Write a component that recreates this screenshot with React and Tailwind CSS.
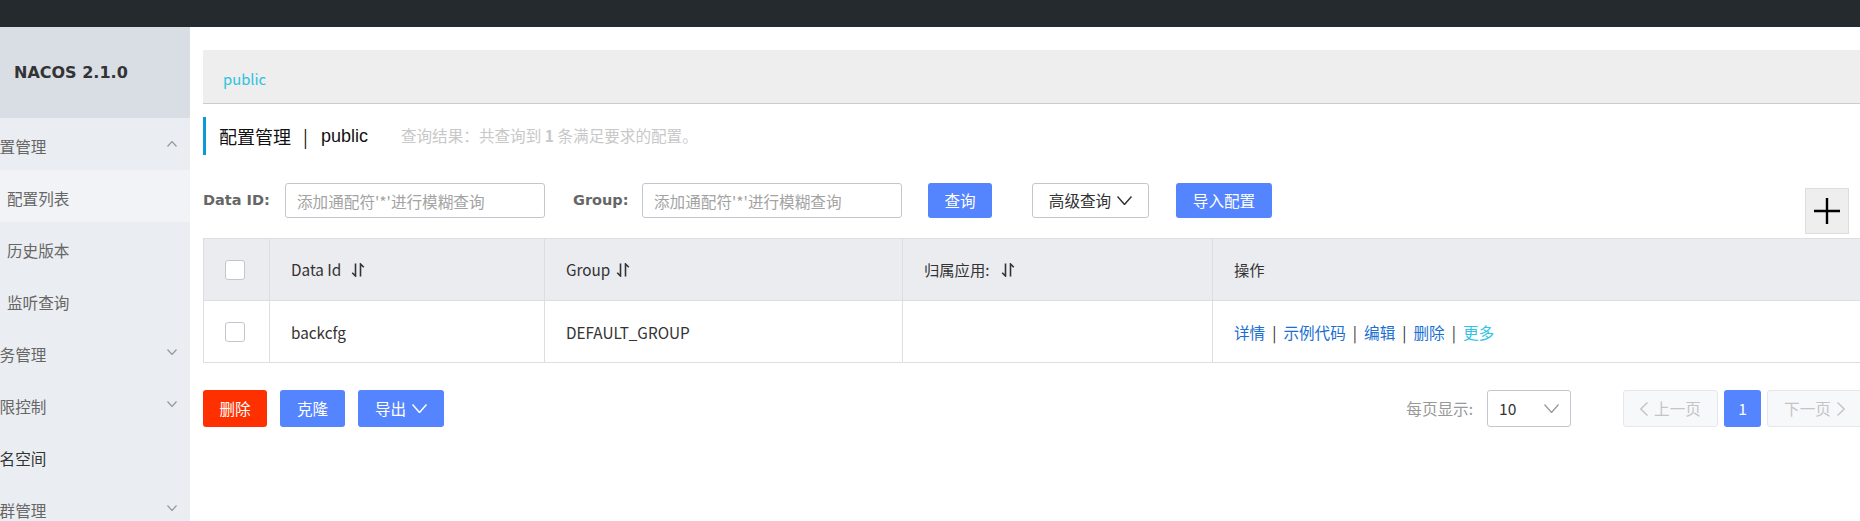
import React from "react";

const Chevron = ({ dir = "down", color = "#999", w = 10, h = 6, sw = 1.2 }) => (
  <svg width={w} height={h} viewBox={`0 0 ${w} ${h}`} fill="none">
    {dir === "down" ? (
      <polyline points={`0.5,0.5 ${w / 2},${h - 0.5} ${w - 0.5},0.5`} stroke={color} strokeWidth={sw} />
    ) : (
      <polyline points={`0.5,${h - 0.5} ${w / 2},0.5 ${w - 0.5},${h - 0.5}`} stroke={color} strokeWidth={sw} />
    )}
  </svg>
);

const SortIcon = ({ ml = "ml-[10px]" }) => (
  <svg width="14" height="14" viewBox="0 0 14 14" fill="none" className={ml}>
    <path d="M4.5 0.5 V13 L1.2 9.7" stroke="#333" strokeWidth="1.6" />
    <path d="M9.5 13.5 V1 L12.8 4.3" stroke="#333" strokeWidth="1.6" />
  </svg>
);

const MenuItem = ({ label, sub, chevron, active, dark }) => (
  <div
    className={`h-[52px] shrink-0 flex items-center justify-between pr-[13px] pt-[6px] ${
      active ? "bg-[#f2f3f7]" : ""
    }`}
  >
    <span
      className={`text-[15.6px] whitespace-nowrap ${sub ? "ml-[7px]" : "ml-[-16px]"} ${
        dark ? "text-[#333]" : "text-[#666]"
      }`}
    >
      {label}
    </span>
    {chevron && (
      <span className="-mt-[6px]">
        <Chevron dir={chevron} />
      </span>
    )}
  </div>
);

const Checkbox = () => (
  <div className="w-[20px] h-[20px] border border-[#c4c6cf] rounded-[3px] bg-white" />
);

export default function App() {
  const cols = ["w-[66px]", "w-[275px]", "w-[358px]", "w-[310px]", "w-[650px]"];
  const cell = "shrink-0 border-r border-[#dcdee3] flex items-center pl-[21px]";
  return (
    <div className="w-[1860px] h-[521px] overflow-hidden bg-white flex flex-col font-['Noto_Sans_CJK_SC',sans-serif]">
      <div className="h-[27px] shrink-0 bg-[#252a2f]" />
      <div className="flex flex-1 min-h-0">
        {/* Sidebar */}
        <div className="w-[190px] shrink-0 bg-[#eaedf1] overflow-hidden flex flex-col">
          <div className="h-[91px] shrink-0 bg-[#d9dde4] flex items-center pl-[14px]">
            <span className="font-['DejaVu_Sans',sans-serif] font-bold text-[16px] text-[#333]">
              NACOS 2.1.0
            </span>
          </div>
          <MenuItem label="配置管理" chevron="up" />
          <MenuItem label="配置列表" sub active />
          <MenuItem label="历史版本" sub />
          <MenuItem label="监听查询" sub />
          <MenuItem label="服务管理" chevron="down" />
          <MenuItem label="权限控制" chevron="down" />
          <MenuItem label="命名空间" dark />
          <MenuItem label="集群管理" chevron="down" />
        </div>

        {/* Main */}
        <div className="flex-1 min-w-0 pl-[13px] pt-[23px]">
          <div className="w-[1659px]">
            {/* Breadcrumb */}
            <div className="h-[54px] bg-[#eeeeee] border-b border-[#cccccc] flex items-center pl-[20px] pt-[6px]">
              <span className="text-[14.8px] text-[#2cc2e0]">public</span>
            </div>

            {/* Title */}
            <div className="mt-[13px] h-[38px] border-l-[3px] border-[#0a9bd4] flex items-center pl-[13px]">
              <span className="text-[18px] text-[#111]">配置管理</span>
              <span className="text-[18px] text-[#111] ml-[12px]">|</span>
              <span className="text-[18px] text-[#111] ml-[13px] font-['Liberation_Sans',sans-serif]">public</span>
              <span className="text-[15.6px] text-[#c8c8c8] ml-[33px]">
                查询结果：共查询到 <b className="font-bold">1</b> 条满足要求的配置。
              </span>
            </div>

            {/* Filter row */}
            <div className="mt-[28px] h-[35px] flex items-center">
              <span className="w-[66px] shrink-0 font-['DejaVu_Sans',sans-serif] font-bold text-[14.5px] text-[#666] whitespace-nowrap">
                Data ID:
              </span>
              <input
                className="ml-[16px] w-[260px] h-[35px] border border-[#c4c6cf] rounded-[3px] px-[11px] text-[15.6px] text-[#333] outline-none placeholder:text-[#a3a3a3]"
                placeholder="添加通配符'*'进行模糊查询"
              />
              <span className="ml-[28px] w-[53px] shrink-0 font-['DejaVu_Sans',sans-serif] font-bold text-[14.5px] text-[#666] whitespace-nowrap">
                Group:
              </span>
              <input
                className="ml-[16px] w-[260px] h-[35px] border border-[#c4c6cf] rounded-[3px] px-[11px] text-[15.6px] text-[#333] outline-none placeholder:text-[#a3a3a3]"
                placeholder="添加通配符'*'进行模糊查询"
              />
              <button className="ml-[26px] w-[64px] h-[35px] bg-[#5584ff] text-white rounded-[3px] text-[15.6px]">
                查询
              </button>
              <button className="ml-[40px] w-[117px] h-[35px] bg-white border border-[#c4c6cf] rounded-[3px] text-[15.6px] text-[#333] flex items-center justify-center gap-[6px]">
                高级查询
                <Chevron dir="down" color="#333" w={15} h={9} sw={1.5} />
              </button>
              <button className="ml-[27px] w-[96px] h-[35px] bg-[#5584ff] text-white rounded-[3px] text-[15.6px]">
                导入配置
              </button>
              <div className="ml-auto mr-[13px] self-start mt-[5px] w-[44px] h-[46px] shrink-0 bg-[#eeeeee] border border-[#dddddd] flex items-center justify-center">
                <svg width="26" height="26" viewBox="0 0 26 26">
                  <path d="M13 0 V26 M0 13 H26" stroke="#000" strokeWidth="2.4" />
                </svg>
              </div>
            </div>

            {/* Table */}
            <div className="mt-[20px] border-t border-l border-[#dcdee3]">
              <div className="flex h-[62px] bg-[#ebecf0] border-b border-[#dcdee3] text-[15.3px] text-[#333]">
                <div className={`${cols[0]} ${cell}`}>
                  <Checkbox />
                </div>
                <div className={`${cols[1]} ${cell}`}>
                  Data Id <SortIcon />
                </div>
                <div className={`${cols[2]} ${cell}`}>
                  Group <SortIcon ml="ml-[6px]" />
                </div>
                <div className={`${cols[3]} ${cell}`}>
                  归属应用: <SortIcon ml="ml-[12px]" />
                </div>
                <div className={`${cols[4]} ${cell}`}>操作</div>
              </div>
              <div className="flex h-[62px] bg-white border-b border-[#dcdee3] text-[15.3px] text-[#333]">
                <div className={`${cols[0]} ${cell}`}>
                  <Checkbox />
                </div>
                <div className={`${cols[1]} ${cell} pt-[2px]`}>backcfg</div>
                <div className={`${cols[2]} ${cell} pt-[2px]`}>DEFAULT_GROUP</div>
                <div className={`${cols[3]} ${cell}`} />
                <div className={`${cols[4]} ${cell} pt-[3px] text-[15.6px]`}>
                  <span className="text-[#1a6fd1]">详情</span>
                  <span className="mx-[7px] text-[#333]">|</span>
                  <span className="text-[#1a6fd1]">示例代码</span>
                  <span className="mx-[7px] text-[#333]">|</span>
                  <span className="text-[#1a6fd1]">编辑</span>
                  <span className="mx-[7px] text-[#333]">|</span>
                  <span className="text-[#1a6fd1]">删除</span>
                  <span className="mx-[7px] text-[#333]">|</span>
                  <span className="text-[#33c3e3]">更多</span>
                </div>
              </div>
            </div>

            {/* Bottom row */}
            <div className="mt-[27px] h-[37px] flex items-center justify-between">
              <div className="flex items-center">
                <button className="w-[64px] h-[37px] bg-[#ff3000] text-white rounded-[3px] text-[15.6px]">删除</button>
                <button className="ml-[13px] w-[65px] h-[37px] bg-[#5584ff] text-white rounded-[3px] text-[15.6px]">克隆</button>
                <button className="ml-[13px] w-[86px] h-[37px] bg-[#5584ff] text-white rounded-[3px] text-[15.6px] flex items-center justify-center gap-[6px]">
                  导出
                  <Chevron dir="down" color="#fff" w={15} h={9} sw={1.5} />
                </button>
              </div>
              <div className="flex items-center">
                <span className="text-[15.6px] text-[#999]">每页显示:</span>
                <div className="ml-[14px] w-[84px] h-[37px] border border-[#c4c6cf] rounded-[3px] flex items-center justify-between pl-[11px] pr-[11px]">
                  <span className="text-[15.6px] text-[#333]">10</span>
                  <Chevron dir="down" color="#999" w={15} h={9} sw={1.3} />
                </div>
                <div className="ml-[52px] w-[95px] h-[37px] bg-[#f7f8fa] border border-[#e6e7eb] rounded-[3px] flex items-center justify-center gap-[6px] text-[15.6px] text-[#c4c4c4]">
                  <svg width="8" height="14" viewBox="0 0 8 14" fill="none">
                    <polyline points="7.5,0.5 0.8,7 7.5,13.5" stroke="#c4c4c4" strokeWidth="1.4" />
                  </svg>
                  上一页
                </div>
                <div className="ml-[6px] w-[37px] h-[37px] bg-[#5584ff] rounded-[3px] flex items-center justify-center text-[15.6px] text-white">
                  1
                </div>
                <div className="ml-[6px] w-[95px] h-[37px] bg-[#f7f8fa] border border-[#e6e7eb] rounded-[3px] flex items-center justify-center gap-[6px] text-[15.6px] text-[#c4c4c4]">
                  下一页
                  <svg width="8" height="14" viewBox="0 0 8 14" fill="none">
                    <polyline points="0.5,0.5 7.2,7 0.5,13.5" stroke="#c4c4c4" strokeWidth="1.4" />
                  </svg>
                </div>
              </div>
            </div>
          </div>
        </div>
      </div>
    </div>
  );
}
